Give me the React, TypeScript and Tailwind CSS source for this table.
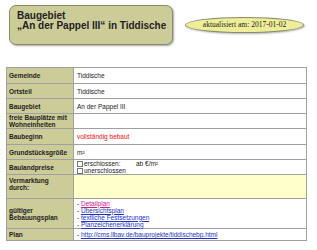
import React from 'react';

const rows: { label: string; value: React.ReactNode; h: string }[] = [
  { label: 'Gemeinde', value: 'Tiddische', h: 'h-[16px]' },
  { label: 'Ortsteil', value: 'Tiddische', h: 'h-[15px]' },
  { label: 'Baugebiet', value: 'An der Pappel III', h: 'h-[15px]' },
  { label: 'freie Bauplätze mit Wohneinheiten', value: '', h: 'h-[15px]' },
  { label: 'Baubeginn', value: <span className="text-[#ee1111]">vollständig bebaut</span>, h: 'h-[16px]' },
  { label: 'Grundstücksgröße', value: <span>m²</span>, h: 'h-[15px]' },
];

function Box() {
  return <span className="inline-block w-[6px] h-[6px] border border-[#777] bg-white mr-[1px] shrink-0" />;
}

export default function App() {
  return (
    <div className="w-[317px] h-[250px] bg-white relative overflow-hidden font-['Liberation_Sans',Arial,sans-serif]">
      <div className="flex items-start pt-[5px]">
        <div className="ml-[9px] w-[164px] h-[40px] rounded-[7px] bg-[#cccc99] border border-[#8a8a70] shadow-[1px_1px_2px_rgba(0,0,0,0.35)] pl-[7px] pt-[5px]">
          <div className="text-[10px] leading-[10px] font-bold text-[#222]">Baugebiet</div>
          <div className="text-[10px] leading-[10px] font-bold text-[#222]">„An der Pappel III“ in Tiddische</div>
        </div>
        <div className="ml-[12px] mt-[12px] w-[119px] h-[16px] rounded-[50%] bg-[#eeee99] border border-[#8a8a70] shadow-[1px_1px_2px_rgba(0,0,0,0.3)] flex items-center justify-center font-['Liberation_Serif',serif] text-[7.5px] text-[#222]">
          aktualisiert am: 2017-01-02
        </div>
      </div>

      <table className="absolute left-[6px] top-[67px] w-[301px] border-collapse text-[6.5px] leading-[7px] text-[#222]">
        <tbody>
          {rows.map((r) => (
            <tr key={r.label} className={r.h}>
              <td className="w-[67px] bg-[#cccc99] border border-[#a0a0a0] px-[2px] font-bold align-middle">{r.label}</td>
              <td className="bg-white border border-[#a0a0a0] px-[3px] align-middle">{r.value}</td>
            </tr>
          ))}
          <tr className="h-[15px]">
            <td className="bg-[#cccc99] border border-[#a0a0a0] px-[2px] font-bold">Baulandpreise</td>
            <td className="bg-white border border-[#a0a0a0] px-[3px]">
              <div className="flex items-center h-[7px]"><Box /><span className="w-[52px]">erschlossen:</span><span>ab €/m²</span></div>
              <div className="flex items-center h-[7px]"><Box /><span>unerschlossen</span></div>
            </td>
          </tr>
          <tr className="h-[24px]">
            <td className="bg-[#cccc99] border border-[#a0a0a0] px-[2px] font-bold align-top pt-[2px]">Vermarktung<br />durch:</td>
            <td className="bg-[#ffffcc] border border-[#a0a0a0] px-[3px]"></td>
          </tr>
          <tr className="h-[30px]">
            <td className="bg-[#cccc99] border border-[#a0a0a0] px-[2px] font-bold">gültiger<br />Bebauungsplan</td>
            <td className="bg-white border border-[#a0a0a0] px-[3px]">
              <div className="h-[7px] leading-[7px]">- <span className="text-[#cc2288] underline">Detailplan</span></div>
              <div className="h-[7px] leading-[7px]">- <span className="text-[#2233cc] underline">Übersichtsplan</span></div>
              <div className="h-[7px] leading-[7px]">- <span className="text-[#2233cc] underline">textliche Festsetzungen</span></div>
              <div className="h-[7px] leading-[7px]">- <span className="text-[#2233cc] underline">Planzeichenerklärung</span></div>
            </td>
          </tr>
          <tr className="h-[12px]">
            <td className="bg-[#cccc99] border border-[#a0a0a0] px-[2px] font-bold">Plan</td>
            <td className="bg-white border border-[#a0a0a0] px-[3px]">- <span className="text-[#2233cc] underline">http://cms.llbav.de/bauprojekte/tiddischebp.html</span></td>
          </tr>
        </tbody>
      </table>
    </div>
  );
}
